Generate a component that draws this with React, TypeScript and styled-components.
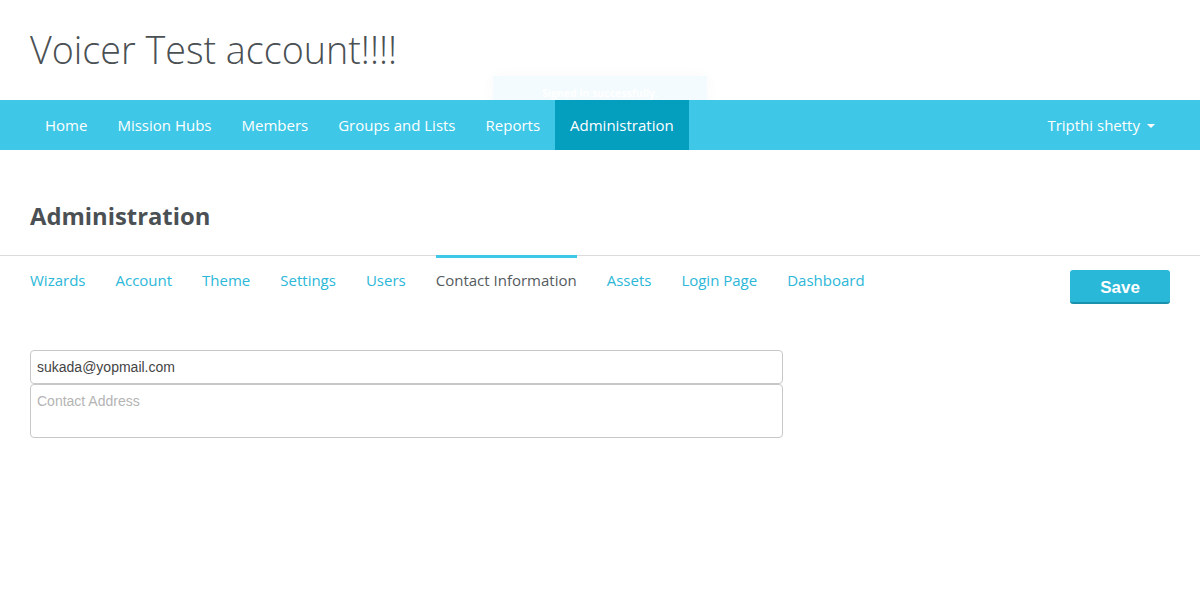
import React from "react";
import styled, { createGlobalStyle } from "styled-components";

const GlobalStyle = createGlobalStyle`
  html, body { margin: 0; padding: 0; background: #fff; }
  body { font-family: "Open Sans", "Liberation Sans", sans-serif; }
  * { box-sizing: border-box; }
`;

const Header = styled.header`
  position: relative;
  height: 100px;
  display: flex;
  align-items: center;
  padding: 0 30px;
`;

const Title = styled.h1`
  margin: 0;
  font-family: "Open Sans", sans-serif;
  font-weight: 300;
  font-size: 37.7px;
  line-height: 1;
  color: #4a5053;
`;

const Toast = styled.div`
  position: absolute;
  left: 493px;
  top: 76px;
  width: 214px;
  height: 48px;
  background: #f4fbfe;
  box-shadow: 0 0 14px rgba(0, 0, 0, 0.03);
  display: flex;
  justify-content: center;
  padding-top: 10px;
  font-size: 10.5px;
  font-weight: 700;
  color: #ffffff;
`;

const NavBar = styled.nav`
  position: relative;
  z-index: 1;
  height: 50px;
  background: #3ec7e6;
  display: flex;
  justify-content: space-between;
  padding: 0 30px;
`;

const NavGroup = styled.ul`
  display: flex;
  margin: 0;
  padding: 0;
  list-style: none;
`;

const NavItem = styled.li<{ $active?: boolean }>`
  display: flex;
  align-items: center;
  padding: 0 15px;
  font-size: 15px;
  color: #fff;
  background: ${(p) => (p.$active ? "#049ebf" : "transparent")};
  gap: 7px;
`;

const Caret = styled.span`
  width: 0;
  height: 0;
  border-left: 4px solid transparent;
  border-right: 4px solid transparent;
  border-top: 4px solid #fff;
  margin-top: 1px;
`;

const PageHead = styled.div`
  height: 105px;
  display: flex;
  align-items: flex-end;
  padding: 0 30px 26px;
`;

const PageTitle = styled.h2`
  margin: 0;
  font-size: 23.8px;
  font-weight: 700;
  color: #4a5053;
  line-height: 1;
`;

const TabRow = styled.div`
  border-top: 1px solid #dcdcdc;
  display: flex;
  justify-content: space-between;
  align-items: flex-start;
  padding: 0 30px;
`;

const Tabs = styled.ul`
  display: flex;
  margin: 0;
  padding: 0;
  list-style: none;
  gap: 30px;
`;

const Tab = styled.li<{ $active?: boolean }>`
  margin-top: -1px;
  border-top: 3px solid ${(p) => (p.$active ? "#3ec7e6" : "transparent")};
  padding-top: 12px;
  font-size: 15px;
  line-height: 20px;
  color: ${(p) => (p.$active ? "#555b5e" : "#2bb7d8")};
`;

const SaveButton = styled.button`
  margin-top: 14px;
  width: 100px;
  height: 34px;
  border: none;
  border-bottom: 2px solid #1a91ad;
  border-radius: 3px;
  background: #2ab8d8;
  color: #fff;
  font-family: "Liberation Sans", Arial, sans-serif;
  font-weight: 700;
  font-size: 17px;
  padding: 3px 0 0;
`;

const Form = styled.div`
  margin: 46px 30px 0;
  width: 753px;
  display: flex;
  flex-direction: column;
`;

const TextInput = styled.input`
  height: 34px;
  border: 1px solid #c8c8c8;
  border-radius: 4px;
  padding: 0 6px;
  font-family: "Liberation Sans", Arial, sans-serif;
  font-size: 14px;
  color: #444;
  outline: none;
`;

const TextArea = styled.textarea`
  height: 54px;
  border: 1px solid #c8c8c8;
  border-radius: 4px;
  padding: 8px 6px;
  font-family: "Liberation Sans", Arial, sans-serif;
  font-size: 14px;
  color: #444;
  resize: none;
  outline: none;
  &::placeholder { color: #b4b4b4; }
`;

const navLinks = ["Home", "Mission Hubs", "Members", "Groups and Lists", "Reports", "Administration"];
const tabs = ["Wizards", "Account", "Theme", "Settings", "Users", "Contact Information", "Assets", "Login Page", "Dashboard"];

export default function App() {
  return (
    <>
      <GlobalStyle />
      <Header>
        <Title>Voicer Test account!!!!</Title>
        <Toast>Signed in successfully.</Toast>
      </Header>
      <NavBar>
        <NavGroup>
          {navLinks.map((n) => (
            <NavItem key={n} $active={n === "Administration"}>{n}</NavItem>
          ))}
        </NavGroup>
        <NavGroup>
          <NavItem>
            Tripthi shetty <Caret />
          </NavItem>
        </NavGroup>
      </NavBar>
      <PageHead>
        <PageTitle>Administration</PageTitle>
      </PageHead>
      <TabRow>
        <Tabs>
          {tabs.map((t) => (
            <Tab key={t} $active={t === "Contact Information"}>{t}</Tab>
          ))}
        </Tabs>
        <SaveButton>Save</SaveButton>
      </TabRow>
      <Form>
        <TextInput defaultValue="sukada@yopmail.com" />
        <TextArea placeholder="Contact Address" />
      </Form>
    </>
  );
}
